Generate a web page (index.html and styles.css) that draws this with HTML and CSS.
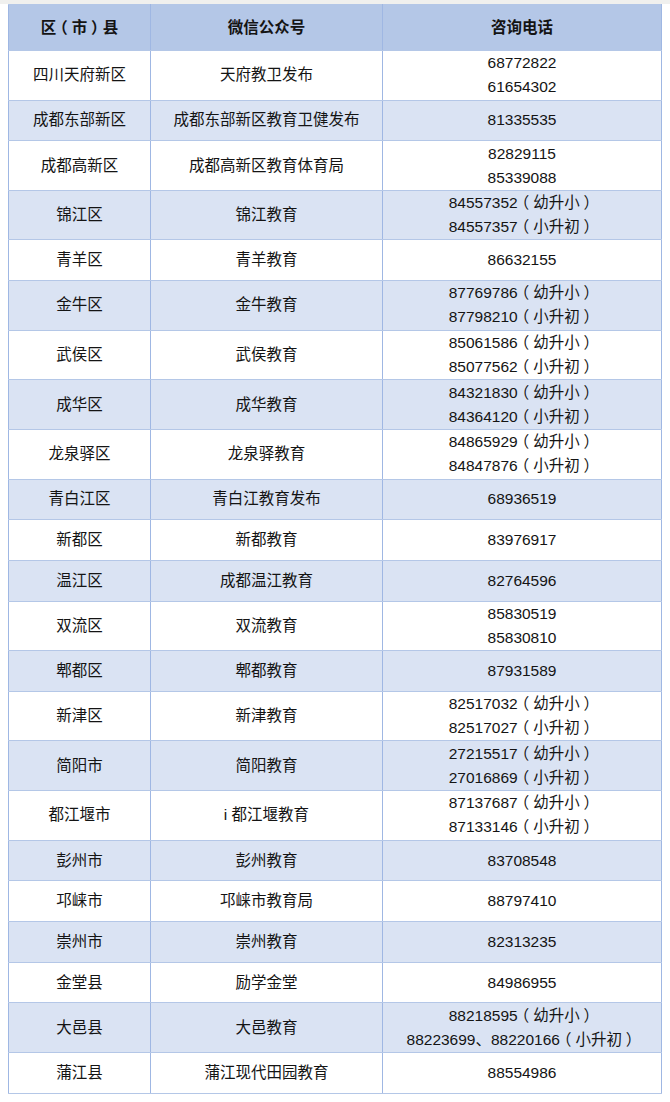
FILE: index.html
```html
<!DOCTYPE html>
<html lang="zh-CN">
<head>
<meta charset="utf-8">
<link rel="stylesheet" href="styles.css">
</head>
<body>
<table class="tbl">
  <colgroup><col class="c1"><col class="c2"><col class="c3"></colgroup>
  <thead>
    <tr class="hd"><th>区<span class="p">（</span>市<span class="p">）</span>县</th><th>微信公众号</th><th>咨询电话</th></tr>
  </thead>
  <tbody>
    <tr class="d"><td>四川天府新区</td><td>天府教卫发布</td><td>68772822<br>61654302</td></tr>
    <tr class="s alt"><td>成都东部新区</td><td>成都东部新区教育卫健发布</td><td>81335535</td></tr>
    <tr class="d"><td>成都高新区</td><td>成都高新区教育体育局</td><td>82829115<br>85339088</td></tr>
    <tr class="d alt"><td>锦江区</td><td>锦江教育</td><td>84557352<span class="p">（</span>幼升小<span class="p">）</span><br>84557357<span class="p">（</span>小升初<span class="p">）</span></td></tr>
    <tr class="s"><td>青羊区</td><td>青羊教育</td><td>86632155</td></tr>
    <tr class="d alt"><td>金牛区</td><td>金牛教育</td><td>87769786<span class="p">（</span>幼升小<span class="p">）</span><br>87798210<span class="p">（</span>小升初<span class="p">）</span></td></tr>
    <tr class="d"><td>武侯区</td><td>武侯教育</td><td>85061586<span class="p">（</span>幼升小<span class="p">）</span><br>85077562<span class="p">（</span>小升初<span class="p">）</span></td></tr>
    <tr class="d alt"><td>成华区</td><td>成华教育</td><td>84321830<span class="p">（</span>幼升小<span class="p">）</span><br>84364120<span class="p">（</span>小升初<span class="p">）</span></td></tr>
    <tr class="d"><td>龙泉驿区</td><td>龙泉驿教育</td><td>84865929<span class="p">（</span>幼升小<span class="p">）</span><br>84847876<span class="p">（</span>小升初<span class="p">）</span></td></tr>
    <tr class="s alt"><td>青白江区</td><td>青白江教育发布</td><td>68936519</td></tr>
    <tr class="s"><td>新都区</td><td>新都教育</td><td>83976917</td></tr>
    <tr class="s alt"><td>温江区</td><td>成都温江教育</td><td>82764596</td></tr>
    <tr class="d"><td>双流区</td><td>双流教育</td><td>85830519<br>85830810</td></tr>
    <tr class="s alt"><td>郫都区</td><td>郫都教育</td><td>87931589</td></tr>
    <tr class="d"><td>新津区</td><td>新津教育</td><td>82517032<span class="p">（</span>幼升小<span class="p">）</span><br>82517027<span class="p">（</span>小升初<span class="p">）</span></td></tr>
    <tr class="d alt"><td>简阳市</td><td>简阳教育</td><td>27215517<span class="p">（</span>幼升小<span class="p">）</span><br>27016869<span class="p">（</span>小升初<span class="p">）</span></td></tr>
    <tr class="d"><td>都江堰市</td><td>i 都江堰教育</td><td>87137687<span class="p">（</span>幼升小<span class="p">）</span><br>87133146<span class="p">（</span>小升初<span class="p">）</span></td></tr>
    <tr class="s alt"><td>彭州市</td><td>彭州教育</td><td>83708548</td></tr>
    <tr class="s"><td>邛崃市</td><td>邛崃市教育局</td><td>88797410</td></tr>
    <tr class="s alt"><td>崇州市</td><td>崇州教育</td><td>82313235</td></tr>
    <tr class="s"><td>金堂县</td><td>励学金堂</td><td>84986955</td></tr>
    <tr class="d alt"><td>大邑县</td><td>大邑教育</td><td>88218595<span class="p">（</span>幼升小<span class="p">）</span><br>88223699、88220166<span class="p">（</span>小升初<span class="p">）</span></td></tr>
    <tr class="s"><td>蒲江县</td><td>蒲江现代田园教育</td><td>88554986</td></tr>
  </tbody>
</table>
</body>
</html>
```

FILE: styles.css
```css
html, body {
  margin: 0;
  padding: 0;
  background: #ffffff;
}
body {
  border-top: 4px solid #f0f0ee;
  padding: 0 0 0 8px;
  font-family: "Liberation Sans", "Noto Sans CJK SC", sans-serif;
  font-size: 15.5px;
  color: #141414;
}
.tbl {
  width: 653px;
  table-layout: fixed;
  border-collapse: collapse;
  border: 1px solid #b4c7e7;
}
.c1 { width: 142px; }
.c2 { width: 232px; }
.c3 { width: 279px; }
.tbl th,
.tbl td {
  padding: 0;
  text-align: center;
  vertical-align: middle;
  line-height: 24px;
  border-top: 1px solid #b4c7e7;
  border-bottom: 1px solid #b4c7e7;
  border-left: 1px solid #9fb7e3;
  border-right: 1px solid #9fb7e3;
}
.tbl th {
  font-weight: bold;
}
.p {
  display: inline-block;
  width: 1em;
  height: 24px;
  vertical-align: top;
  text-align: center;
  font-feature-settings: "halt";
}
.hd {
  height: 46px;
  background: #b4c7e7;
}
.alt {
  background: #dae3f3;
}
.s { height: 40.7px; }
.d { height: 49.6px; }
```
